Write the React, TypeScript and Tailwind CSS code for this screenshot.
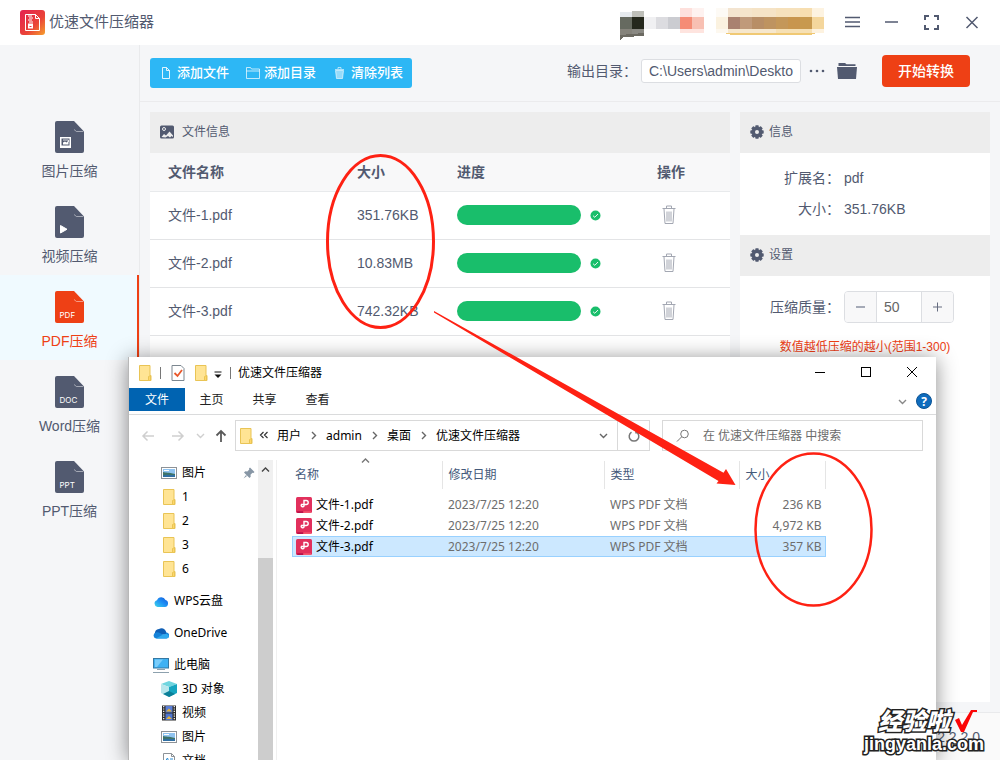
import { useState } from "react";
import type { ReactNode } from "react";

const tools = [
  { id: "image", label: "图片压缩", badge: "image" },
  { id: "video", label: "视频压缩", badge: "video" },
  { id: "pdf", label: "PDF压缩", badge: "PDF" },
  { id: "word", label: "Word压缩", badge: "DOC" },
  { id: "ppt", label: "PPT压缩", badge: "PPT" },
];

const files = [
  { name: "文件-1.pdf", size: "351.76KB", packed: "236 KB", progress: 100 },
  { name: "文件-2.pdf", size: "10.83MB", packed: "4,972 KB", progress: 100 },
  { name: "文件-3.pdf", size: "742.32KB", packed: "357 KB", progress: 100 },
];

/* ---------- icons ---------- */

function LogoIcon() {
  return (
    <svg width="25" height="25" viewBox="0 0 25 25">
      <defs>
        <linearGradient id="logo" x1="0" y1="0" x2="1" y2="1">
          <stop offset="0.1" stopColor="#e5264d" />
          <stop offset="0.6" stopColor="#ea4438" />
          <stop offset="1" stopColor="#f6a02d" />
        </linearGradient>
      </defs>
      <rect width="25" height="25" rx="3" fill="url(#logo)" />
      <path d="M5.500 4.500h10l4 4v12h-14z" fill="none" stroke="#fff" />
      <path d="M15.500 4.500v4h4" fill="none" stroke="#fff" />
      <path d="M8 6h4M9 8h4M8 10h4M9 12h4" stroke="#fff" />
      <path d="M8 13.500h5v5H8z" fill="#fff" />
      <path d="M9.500 16.500h2" stroke="#e5344a" />
    </svg>
  );
}

function ToolIcon({ badge }: { badge: string }) {
  return (
    <svg width="29" height="32" viewBox="0 0 29 32">
      <path d="M2 0h17l10 10.500V30a2 2 0 0 1-2 2H2a2 2 0 0 1-2-2V2a2 2 0 0 1 2-2z" fill="currentColor" />
      <path d="M19 8.500l2.500 2H28" fill="none" stroke="#fff" strokeOpacity="0.600" strokeWidth="0.800" />
      {badge === "image" && (
        <g>
          <rect x="5" y="16" width="11" height="11" fill="#fff" />
          <rect x="6.500" y="17.500" width="8" height="7" fill="#525a70" />
          <path d="M8 23.500v-2l2-1 1.500 1 2-2v4z" fill="#fff" />
          <path d="M8 19h5.500v2" fill="none" stroke="#fff" strokeWidth="0.800" />
        </g>
      )}
      {badge === "video" && <path d="M5.500 19.500v7.500l6.500-3.750z" fill="#fff" stroke="#fff" strokeLinejoin="round" />}
      {badge.length === 3 && (
        <text x="4.500" y="27" fill="#fff" fontSize="8" fontFamily="Inter, sans-serif">
          {badge}
        </text>
      )}
    </svg>
  );
}

function GearIcon() {
  return (
    <svg width="14" height="14" viewBox="0 0 14 14" fill="currentColor">
      {[0, 45, 90, 135].map((a) => (
        <rect key={a} x="5.250" y="0.300" width="3.500" height="13.400" rx="0.800" transform={`rotate(${a} 7 7)`} />
      ))}
      <circle cx="7" cy="7" r="5.300" />
      <circle cx="7" cy="7" r="2" fill="#ededed" />
    </svg>
  );
}

function TrashIcon() {
  return (
    <svg width="14" height="20" viewBox="0 0 14 20" fill="none" stroke="#a3a7b2">
      <path d="M0.500 3.500h13M4.500 3V1h5v2M2 4l1 14.500h8L12 4" />
      <path d="M5 6.500v10M7 6.500v10M9 6.500v10" />
    </svg>
  );
}

function FolderYellow() {
  return (
    <svg width="16" height="16" viewBox="0 0 16 16">
      <path d="M2.500.5h10.500v10h1v5H2.500z" fill="#ffe494" stroke="#e9c455" />
      <path d="M11.500 15.500V11.500l2-1v5z" fill="#ffd767" stroke="#e9c455" />
    </svg>
  );
}

function PictureIcon() {
  return (
    <svg width="16" height="16" viewBox="0 0 16 16">
      <rect x="0.500" y="2.500" width="15" height="11" fill="#fff" stroke="#8d9297" />
      <rect x="2" y="4" width="12" height="8" fill="#8fc3f0" />
      <path d="M2 7c3 1 5 0 12 2v3H2z" fill="#3f7468" />
      <path d="M2 10.500c4-1.500 7 0 12-.5v2H2z" fill="#2f6fa3" />
      <path d="M3 5.500h5" stroke="#fff" />
    </svg>
  );
}

function PdfIcon() {
  return (
    <svg width="16" height="16" viewBox="0 0 16 16" className="shrink-0">
      <rect width="16" height="16" rx="1.500" fill="#e2305c" />
      <path d="M1 14.300h6v1.700H1.500z" fill="#b9104a" />
      <path d="M7.500 14.300H15V16H7.500z" fill="#f5556c" />
      <path d="M8 9.500V3.500h2.200a2 2 0 0 1 0 4H5.400a1.500 1.500 0 1 0 2.600 1.500" fill="none" stroke="#fff" strokeWidth="1.400" />
    </svg>
  );
}

function CloudIcon() {
  return (
    <svg width="16" height="16" viewBox="0 0 16 16">
      <defs>
        <linearGradient id="cloud" x1="0" y1="1" x2="1" y2="0">
          <stop offset="0" stopColor="#3fd8ea" />
          <stop offset="0.500" stopColor="#1e90f5" />
          <stop offset="1" stopColor="#1357d8" />
        </linearGradient>
      </defs>
      <path d="M4.500 14A3.500 3.500 0 0 1 4 7.200 4.600 4.600 0 0 1 12.500 7 3.600 3.600 0 0 1 12 14z" fill="url(#cloud)" />
    </svg>
  );
}

function OneDriveIcon() {
  return (
    <svg width="16" height="16" viewBox="0 0 16 16">
      <path d="M2 9a4 4 0 0 1 4-5 4.600 4.600 0 0 1 7 2.500L14 10z" fill="#0f5fb5" />
      <path d="M3 13.500A3 3 0 0 1 3 7.600c2-.8 4 .2 9 3.400l1-3.500a3 3 0 0 1 .3 6z" fill="#1582d8" />
      <path d="M3 13.500L10 9.500c2-1 5-1 5.900 1.500a2.500 2.500 0 0 1-2.400 2.500z" fill="#2fa9ee" />
    </svg>
  );
}

function ComputerIcon() {
  return (
    <svg width="16" height="16" viewBox="0 0 16 16">
      <rect x="0.500" y="1.500" width="15" height="9.500" fill="#3fb1f3" stroke="#3478a3" />
      <path d="M2 2.500h8L4 10H2z" fill="#7acdfa" />
      <path d="M4 12.500h8M0 15.500h16" stroke="#8da1ae" />
    </svg>
  );
}

function CubeIcon() {
  return (
    <svg width="16" height="16" viewBox="0 0 16 16">
      <path d="M8 0l8 3-8 3-8-3z" fill="#6fd5df" />
      <path d="M0 3l8 3v10l-8-4z" fill="#b7e6ec" />
      <path d="M16 3L8 6v10l8-4z" fill="#15a5c0" />
      <path d="M2 13l6-3 6 3-6 3z" fill="#0b7f98" />
    </svg>
  );
}

function FilmIcon() {
  return (
    <svg width="16" height="16" viewBox="0 0 16 16">
      <rect x="1" y="0.500" width="14" height="15" fill="#2c2c2c" />
      <rect x="4.500" y="1" width="7" height="6.500" fill="#5b7fd6" />
      <rect x="4.500" y="8.500" width="7" height="6.500" fill="#4f76d0" />
      <path d="M5 6.500l3-3 3 3zM5 14l3-3 3 3z" fill="#e2b23c" />
      <path d="M2.700 1v14M13.300 1v14" stroke="#fff" strokeWidth="1.200" strokeDasharray="1.200 1.200" />
    </svg>
  );
}

function DocIcon() {
  return (
    <svg width="16" height="16" viewBox="0 0 16 16">
      <path d="M2.500.5h8l3 3v12h-11z" fill="#fff" stroke="#8d9297" />
      <path d="M10.500.5v3h3" fill="none" stroke="#8d9297" />
      <path d="M4.500 8l2-3 1 3M9 6h3M9 8h3M4.500 10.500h7" fill="none" stroke="#2d8fd6" />
    </svg>
  );
}

function Chevron({ d = "M2 4l3.500 3.500L9 4", color = "#666" }: { d?: string; color?: string }) {
  return (
    <svg width="11" height="11" viewBox="0 0 11 11" fill="none" stroke={color} strokeWidth="1.400">
      <path d={d} />
    </svg>
  );
}

/* mosaic over the account area */
function Mosaic() {
  const cells: [number, number, string, number?, number?][] = [
    [0, 4, "#e6eaee", 12, 5],
    [12, 3, "#bebfb9", 12, 6],
    [0, 9, "#666a60"],
    [12, 9, "#25281d"],
    [0, 21, "#85837b", 12, 7],
    [12, 21, "#8a8983", 12, 6],
    [24, 9, "#f0f0f2"],
    [36, 9, "#dcdce0"],
    [48, 9, "#cbccd1"],
    [60, 9, "#f58c76"],
    [72, 9, "#f8c0b3"],
    [60, 0, "#fee0dc", 12, 9],
    [72, 0, "#fef2f0", 12, 9],
    [60, 21, "#fee4df", 24, 4],
    [96, 0, "#fdfaf5", 12, 9],
    [108, 0, "#f3e4d0", 12, 9],
    [120, 0, "#f5e5cb", 12, 9],
    [132, 0, "#f5e3c6", 24, 9],
    [156, 0, "#f6e1bc", 24, 9],
    [180, 0, "#f7deb0", 12, 9],
    [192, 0, "#fdf3e1", 12, 9],
    [96, 9, "#fbf2e0"],
    [108, 9, "#a98170"],
    [120, 9, "#c09a7a"],
    [132, 9, "#b88e66"],
    [144, 9, "#be9360"],
    [156, 9, "#c49759"],
    [168, 9, "#c8954e"],
    [180, 9, "#c8994e"],
    [192, 9, "#f4d69c"],
    [96, 21, "#fdf8ef", 12, 4],
    [108, 21, "#f6e7cd", 48, 4],
    [156, 21, "#f6e0b4", 36, 4],
    [192, 21, "#fdf2df", 12, 4],
  ];
  return (
    <svg width="204" height="32" viewBox="0 0 204 32" shapeRendering="crispEdges" className="mt-[3px]">
      {cells.map(([x, y, fill, w = 12, h = 12], i) => (
        <rect key={i} x={x} y={y} width={w} height={h} fill={fill} />
      ))}
      <path d="M0 27l24-2v3L4 29l-4 3z" fill="#6c6a62" />
      <path d="M104 25h92l-6 2h-78z" fill="#f0c974" />
    </svg>
  );
}

/* ---------- compressor window ---------- */

function PanelTitle({ icon, children }: { icon: ReactNode; children: ReactNode }) {
  return (
    <h2 className="flex h-[41px] items-center bg-[#ededed] px-[10px] pb-[2px] text-xs">
      {icon}
      {children}
    </h2>
  );
}

function TopBar() {
  return (
    <header className="flex h-[45px] shrink-0 items-center bg-white px-5">
      <LogoIcon />
      <h1 className="ml-1 text-[15px]">优速文件压缩器</h1>
      <div className="ml-auto flex items-center">
        <Mosaic />
        <button aria-label="菜单" className="ml-5">
          <svg width="17" height="13" viewBox="0 0 17 13" stroke="#525a70" strokeWidth="1.500">
            <path d="M1 1.500h15M1 6h15M1 10.500h15" />
          </svg>
        </button>
        <button aria-label="最小化" className="ml-[23px]">
          <svg width="14" height="14" viewBox="0 0 14 14" stroke="#525a70" strokeWidth="1.500">
            <path d="M1 6h13" />
          </svg>
        </button>
        <button aria-label="最大化" className="ml-6">
          <svg width="18" height="16" viewBox="0 0 18 16" fill="none" stroke="#525a70" strokeWidth="2">
            <path d="M7 1H3v4M12 1h4v4M7 14H3v-4M12 14h4v-4" />
          </svg>
        </button>
        <button aria-label="关闭" className="ml-6">
          <svg width="16" height="14" viewBox="0 0 16 14" stroke="#525a70" strokeWidth="1.500">
            <path d="M2.500 1l11 11M13.500 1l-11 11" />
          </svg>
        </button>
      </div>
    </header>
  );
}

function Toolbar() {
  return (
    <div className="flex h-[57px] items-center border-b border-[#ebebed] pr-[30px] pl-[10px]">
      <div className="flex h-[30px] items-center gap-[17px] rounded-[3px] bg-[#2db7f5] px-[9px] text-[13px] font-medium whitespace-nowrap text-white">
        <button className="flex items-center gap-1">
          <svg width="14" height="14" viewBox="0 0 14 14" fill="none" stroke="#fff" strokeOpacity="0.850">
            <path d="M3.500 1.500h4l3 3v8h-7zM7.500 1.500v3h3" />
          </svg>
          添加文件
        </button>
        <button className="flex items-center gap-1">
          <svg width="14" height="14" viewBox="0 0 14 14" fill="none" stroke="#fff" strokeOpacity="0.700">
            <path d="M0.500 12.500v-11h4l1 1.500h8v9.500zM0.500 5h13" />
          </svg>
          添加目录
        </button>
        <button className="flex items-center gap-1">
          <svg width="14" height="14" viewBox="0 0 14 14" fill="none" stroke="#fff" strokeOpacity="0.600">
            <path d="M2 3.500h9M5 3V1.500h3V3" />
            <path d="M2.500 4.500h8l-1 8h-6z" fill="#fff" fillOpacity="0.500" />
          </svg>
          清除列表
        </button>
      </div>
      <div className="ml-auto flex items-center pb-1">
        <label htmlFor="output" className="mr-1 text-sm">
          输出目录：
        </label>
        <input
          id="output"
          readOnly
          defaultValue="C:\Users\admin\Deskto"
          className="h-6 w-40 rounded-[3px] border border-[#dcdee2] bg-white pr-1 pl-[7px] text-sm"
        />
        <button aria-label="更多" className="ml-2">
          <svg width="16" height="6" viewBox="0 0 16 6" fill="#525a70">
            <circle cx="2" cy="3" r="1.300" />
            <circle cx="8" cy="3" r="1.300" />
            <circle cx="14" cy="3" r="1.300" />
          </svg>
        </button>
        <button aria-label="打开目录" className="ml-3">
          <svg width="20" height="18" viewBox="0 0 20 18" fill="#525a70">
            <path d="M1.500 4V1h6.500l1.500 1.200h9V4z" />
            <path d="M0 5h20l-1 12h-18z" />
          </svg>
        </button>
        <button className="ml-[25px] h-8 w-[88px] rounded bg-[#ee4015] text-sm font-medium text-white">开始转换</button>
      </div>
    </div>
  );
}

function FilePanel() {
  return (
    <section className="min-w-0 flex-1 bg-white">
      <PanelTitle
        icon={
          <svg width="14" height="14" viewBox="0 0 14 14" className="mr-2">
            <rect width="14" height="13" y="0.500" rx="1.500" fill="#525a70" />
            <circle cx="4" cy="4" r="1.500" fill="none" stroke="#ededed" />
            <path d="M1.500 12l2.500-3 2 1.500 3.500-4 3.500 4V12l-1.500-1-1.500 1.500L8 11l-2.500 1.500z" fill="#ededed" />
          </svg>
        }
      >
        文件信息
      </PanelTitle>
      <table className="w-full table-fixed text-left text-sm">
        <thead>
          <tr className="h-[38px] border-b border-[#e8eaec] bg-[#f8f8f9]">
            <th className="w-[189px] px-[18px] font-bold">文件名称</th>
            <th className="w-[100px] px-[18px] font-bold">大小</th>
            <th className="w-[200px] px-[18px] font-bold">进度</th>
            <th className="px-[18px] font-bold">操作</th>
          </tr>
        </thead>
        <tbody>
          {files.map((file) => (
            <tr key={file.name} className="h-12 border-b border-[#e3e4e6]">
              <td className="px-[18px]">{file.name}</td>
              <td className="px-[18px]">{file.size}</td>
              <td className="px-[18px]">
                <div className="flex items-center gap-[9px]">
                  <div className="h-5 w-[124px] rounded-full bg-[#f3f3f3]">
                    <div className="h-5 rounded-full bg-[#19be6b]" style={{ width: `${file.progress}%` }} />
                  </div>
                  <svg width="11" height="11" viewBox="0 0 11 11">
                    <circle cx="5.500" cy="5.500" r="5" fill="#19be6b" />
                    <path d="M3 5.700l1.800 1.600L8 4" fill="none" stroke="#fff" strokeWidth="0.900" />
                  </svg>
                </div>
              </td>
              <td className="px-[23px]">
                <button aria-label="删除" className="block">
                  <TrashIcon />
                </button>
              </td>
            </tr>
          ))}
        </tbody>
      </table>
    </section>
  );
}

function SettingsPanel() {
  const [quality, setQuality] = useState(50);
  return (
    <aside className="w-[250px] shrink-0 bg-white">
      <PanelTitle icon={<span className="mr-[5px]"><GearIcon /></span>}>信息</PanelTitle>
      <dl className="grid grid-cols-[100px_1fr] gap-x-1 py-[10px] text-sm leading-[31px]">
        <dt className="text-right">扩展名：</dt>
        <dd>pdf</dd>
        <dt className="text-right">大小：</dt>
        <dd>351.76KB</dd>
      </dl>
      <PanelTitle icon={<span className="mr-[5px]"><GearIcon /></span>}>设置</PanelTitle>
      <div className="mt-[15px] flex items-center gap-1 text-sm">
        <label htmlFor="quality" className="w-[100px] text-right">
          压缩质量：
        </label>
        <div className="flex h-8 overflow-hidden rounded border border-[#dcdee2]">
          <button aria-label="减少" className="w-8 border-r border-[#dcdee2] bg-[#f8f8f9]" onClick={() => setQuality(quality - 1)}>
            <svg width="32" height="12" viewBox="0 0 32 12" stroke="#8a90a0">
              <path d="M11 6h9" strokeWidth="1.400" />
            </svg>
          </button>
          <input
            id="quality"
            value={quality}
            onChange={(e) => setQuality(Number(e.target.value) || 0)}
            className="w-11 px-[7px] text-sm text-[#666]"
          />
          <button aria-label="增加" className="w-8 border-l border-[#dcdee2] bg-[#f8f8f9]" onClick={() => setQuality(quality + 1)}>
            <svg width="32" height="12" viewBox="0 0 32 12" stroke="#666d80">
              <path d="M11 6h9M15.500 1.500v9" />
            </svg>
          </button>
        </div>
      </div>
      <p className="mt-4 text-center text-xs text-[#ee4015]">数值越低压缩的越小(范围1-300)</p>
    </aside>
  );
}

/* ---------- explorer window ---------- */

const tree = [
  { label: "图片", icon: <PictureIcon />, style: "pl-8", pinned: true },
  { label: "1", icon: <FolderYellow />, style: "pl-8" },
  { label: "2", icon: <FolderYellow />, style: "pl-8" },
  { label: "3", icon: <FolderYellow />, style: "pl-8" },
  { label: "6", icon: <FolderYellow />, style: "pl-8" },
  { label: "WPS云盘", icon: <CloudIcon />, style: "mt-2 pl-6" },
  { label: "OneDrive", icon: <OneDriveIcon />, style: "mt-2 pl-6" },
  { label: "此电脑", icon: <ComputerIcon />, style: "mt-2 pl-6" },
  { label: "3D 对象", icon: <CubeIcon />, style: "pl-8" },
  { label: "视频", icon: <FilmIcon />, style: "pl-8" },
  { label: "图片", icon: <PictureIcon />, style: "pl-8" },
  { label: "文档", icon: <DocIcon />, style: "pl-8" },
];

function ExplorerTitle() {
  return (
    <div className="flex h-[31px] shrink-0 items-center pl-2">
      <FolderYellow />
      <span className="ml-[7px] h-3 w-px bg-[#777]" />
      <svg width="14" height="16" viewBox="0 0 14 16" className="ml-[10px]">
        <path d="M1 .5h9l3 3v12H1z" fill="#fff" stroke="#7c8790" />
        <path d="M3.500 8l3 3L11 5" fill="none" stroke="#e8582b" strokeWidth="1.800" />
      </svg>
      <span className="ml-2">
        <FolderYellow />
      </span>
      <svg width="8" height="8" viewBox="0 0 8 8" className="mt-1 ml-[5px]">
        <path d="M.5 1h7" stroke="#111" />
        <path d="M.5 3.500h7L4 7z" fill="#111" />
      </svg>
      <span className="ml-2 h-3 w-px bg-[#777]" />
      <span className="ml-[7px] text-black">优速文件压缩器</span>
      <div className="ml-auto flex pr-[18px]">
        <button aria-label="最小化" className="w-[46px]">
          <svg width="12" height="12" viewBox="0 0 12 12" stroke="#000" shapeRendering="crispEdges">
            <path d="M1 5.500h10" />
          </svg>
        </button>
        <button aria-label="最大化" className="w-[46px]">
          <svg width="12" height="12" viewBox="0 0 12 12" fill="none" stroke="#000" shapeRendering="crispEdges">
            <path d="M1.500.5h9v9h-9z" />
          </svg>
        </button>
        <button aria-label="关闭">
          <svg width="12" height="12" viewBox="0 0 12 12" stroke="#000">
            <path d="M1 0l10 10M11 0L1 10" />
          </svg>
        </button>
      </div>
    </div>
  );
}

function ExplorerTabs() {
  return (
    <nav className="flex h-[27px] shrink-0 items-start border-b border-[#dadbdc]">
      <button className="h-[23px] w-14 bg-[#0063b1] text-white">文件</button>
      <button className="h-[23px] w-[53px]">主页</button>
      <button className="h-[23px] w-[53px]">共享</button>
      <button className="h-[23px] w-[53px]">查看</button>
      <div className="ml-auto flex h-[26px] items-center gap-2 pr-1">
        <Chevron color="#888" />
        <svg width="16" height="16" viewBox="0 0 16 16">
          <circle cx="8" cy="8" r="7.500" fill="#0f6cbd" stroke="#0b5394" />
          <text x="8" y="12.500" textAnchor="middle" fontSize="12" fontWeight="700" fill="#fff" fontFamily="Open Sans">
            ?
          </text>
        </svg>
      </div>
    </nav>
  );
}

function ExplorerAddress() {
  const crumbs = ["用户", "admin", "桌面", "优速文件压缩器"];
  return (
    <div className="flex h-[41px] shrink-0 items-center pr-[13px] pl-3">
      <button aria-label="后退">
        <svg width="14" height="12" viewBox="0 0 14 12" fill="none" stroke="#cfcfcf" strokeWidth="1.500">
          <path d="M13 6H2M6.500 1.500L2 6l4.500 4.500" />
        </svg>
      </button>
      <button aria-label="前进" className="ml-4">
        <svg width="14" height="12" viewBox="0 0 14 12" fill="none" stroke="#cfcfcf" strokeWidth="1.500">
          <path d="M1 6h11M7.500 1.500L12 6l-4.500 4.500" />
        </svg>
      </button>
      <span className="ml-[10px]">
        <Chevron color="#cfcfcf" />
      </span>
      <button aria-label="向上" className="ml-[9px]">
        <svg width="12" height="14" viewBox="0 0 12 14" fill="none" stroke="#5a5a5a" strokeWidth="1.800">
          <path d="M6 13V2M1.500 6.500L6 2l4.500 4.500" />
        </svg>
      </button>
      <div className="ml-2 flex h-[31px] flex-1 items-center border border-[#d9d9d9] pl-[2px] text-black">
        <FolderYellow />
        <svg width="10" height="9" viewBox="0 0 10 9" fill="none" stroke="#333" strokeWidth="1.200" className="mr-2 ml-[5px]">
          <path d="M4.500 1L1.500 4l3 3M8.500 1l-3 3 3 3" />
        </svg>
        {crumbs.map((crumb, i) => (
          <span key={crumb} className="flex items-center whitespace-nowrap">
            {i > 0 && (
              <span className="mx-[7px]">
                <Chevron d="M4 2l3.500 3.500L4 9" />
              </span>
            )}
            {crumb}
          </span>
        ))}
        <span className="mr-2 ml-auto">
          <Chevron />
        </span>
      </div>
      <button aria-label="刷新" className="flex h-[31px] w-8 items-center justify-center border border-l-0 border-[#d9d9d9]">
        <svg width="14" height="14" viewBox="0 0 14 14" fill="none" stroke="#777" strokeWidth="1.500">
          <path d="M9.500 3.200a4.800 4.800 0 1 1-5 0M9 0v3.800h3.500" />
        </svg>
      </button>
      <label className="ml-3 flex h-[31px] w-[261px] items-center border border-[#d9d9d9] pl-[13px]">
        <svg width="14" height="14" viewBox="0 0 14 14" fill="none" stroke="#777">
          <circle cx="8.500" cy="5" r="3.800" />
          <path d="M5.700 7.800L1 12.500" />
        </svg>
        <input
          aria-label="搜索"
          placeholder="在 优速文件压缩器 中搜索"
          className="ml-[13px] min-w-0 flex-1 placeholder:text-[#6b6b6b]"
        />
      </label>
    </div>
  );
}

function Explorer() {
  return (
    <section className="absolute top-[357px] right-16 bottom-0 left-32 flex flex-col overflow-hidden border-l border-[#b8b8b8] bg-white font-['Noto_Sans','Noto_Sans_CJK_SC',sans-serif] text-xs text-[#222] shadow-[0_2px_20px_rgba(0,0,0,0.45)]">
      <ExplorerTitle />
      <ExplorerTabs />
      <ExplorerAddress />
      <div className="flex min-h-0 flex-1 pt-1">
        <ul className="w-[129px] shrink-0 overflow-hidden pt-px text-black">
          {tree.map((node, i) => (
            <li key={i} className={`flex h-6 items-center gap-[5px] whitespace-nowrap ${node.style}`}>
              {node.icon}
              {node.label}
              {node.pinned && (
                <svg width="12" height="12" viewBox="0 0 12 12" className="mr-[3px] ml-auto" fill="#8796a5">
                  <path d="M7 .5L11.500 5l-1 1-1-.3-2 2 .2 2L6.500 11 1 5.500l1.300-1.200 2 .2 2-2L6 1.500z" />
                  <path d="M3 8l1 1-3.500 2.500z" />
                </svg>
              )}
            </li>
          ))}
        </ul>
        <div className="flex w-[15px] shrink-0 flex-col items-center bg-[#f0f0f0] pt-1">
          <Chevron d="M2 7.500L5.500 4 9 7.500" color="#444" />
          <div className="mt-[83px] w-full flex-1 bg-[#cdcdcd]" />
        </div>
        <div className="ml-[3px] min-w-0 flex-1 border-l border-[#f0f0f0] pt-px pl-[15px]">
          <table className="w-[534px] table-fixed text-left">
            <thead>
              <tr className="h-7 text-[#44597a]">
                <th className="w-[150px] border-r border-[#e5e5e5] pl-[3px] font-normal">
                  <div className="relative">
                    名称
                    <span className="absolute -top-3 left-[65px]">
                      <Chevron d="M2 7.500L5.500 4 9 7.500" color="#777" />
                    </span>
                  </div>
                </th>
                <th className="w-[162px] border-r border-[#e5e5e5] pl-[6px] font-normal">修改日期</th>
                <th className="w-[135px] border-r border-[#e5e5e5] pl-[6px] font-normal">类型</th>
                <th className="border-r border-[#e5e5e5] pl-[6px] font-normal">大小</th>
              </tr>
            </thead>
            <tbody className="text-[#6d6d6d]">
              <tr className="h-[5px]" />
              {files.map((file, i) => (
                <tr key={file.name} className={i === 2 ? "h-[21px] bg-[#cce8ff] outline -outline-offset-1 outline-[#99d1ff]" : "h-[21px]"}>
                  <td className="pl-1 text-black">
                    <span className="flex items-center gap-1">
                      <PdfIcon />
                      {file.name}
                    </span>
                  </td>
                  <td className="pl-[6px]">2023/7/25 12:20</td>
                  <td className="pl-[6px]">WPS PDF 文档</td>
                  <td className="pr-1 text-right">{file.packed}</td>
                </tr>
              ))}
            </tbody>
          </table>
        </div>
      </div>
    </section>
  );
}

/* red marks drawn over both windows */
function Annotations() {
  return (
    <svg width="1000" height="760" viewBox="0 0 1000 760" className="pointer-events-none absolute top-0 left-0" fill="none">
      <ellipse cx="380.500" cy="241.500" rx="53" ry="86" stroke="#fe2113" strokeWidth="3" />
      <ellipse cx="813.500" cy="529.500" rx="58" ry="76" stroke="#fe2113" strokeWidth="2.500" />
      <path d="M434 311L723.500 472.700 726 469 735.500 485 716.500 483.500 718.500 481 434 312.500z" fill="#fe2113" />
    </svg>
  );
}

function Watermark() {
  return (
    <div className="pointer-events-none absolute right-4 bottom-[6px] flex flex-col items-end font-['Liberation_Sans','Noto_Sans_CJK_SC',sans-serif] font-black text-white [paint-order:stroke_fill] [-webkit-text-stroke:3px_#222]">
      <div className="flex items-center gap-1 pr-[6px] text-2xl leading-6 italic">
        经验啦
        <svg width="24" height="24" viewBox="0 0 24 24">
          <path d="M1 10l4-2 3 7L17 0h6v2h-4L10 22H7z" fill="#fb0505" />
        </svg>
      </div>
      <span className="text-lg leading-5">jingyanla.com</span>
    </div>
  );
}

export default function App() {
  const [active, setActive] = useState("pdf");

  return (
    <div className="relative flex h-screen flex-col overflow-hidden bg-[#f5f6f8] font-['Liberation_Sans','Noto_Sans_CJK_SC',sans-serif] text-[#525a70]">
      <TopBar />
      <div className="flex min-h-0 flex-1">
        <nav className="w-[140px] shrink-0 border-r border-[#e9eaec] pt-[60px]">
          {tools.map((tool) => (
            <button
              key={tool.id}
              onClick={() => setActive(tool.id)}
              className={`flex h-[85px] w-full flex-col items-center border-r-2 pt-4 pl-[2px] text-sm ${
                active === tool.id ? "border-[#ee4015] bg-[#f0faff] text-[#ee4015]" : "border-transparent"
              }`}
            >
              <ToolIcon badge={tool.badge} />
              <span className="mt-2">{tool.label}</span>
            </button>
          ))}
        </nav>
        <main className="flex min-w-0 flex-1 flex-col">
          <Toolbar />
          <div className="flex flex-1 gap-[10px] p-[10px]">
            <FilePanel />
            <SettingsPanel />
          </div>
          <footer className="flex h-12 items-center justify-end border-t border-[#e9eaec] bg-[#fafafa] pr-5 text-sm">
            2.2.2.0
          </footer>
        </main>
      </div>
      <Explorer />
      <Annotations />
      <Watermark />
    </div>
  );
}
